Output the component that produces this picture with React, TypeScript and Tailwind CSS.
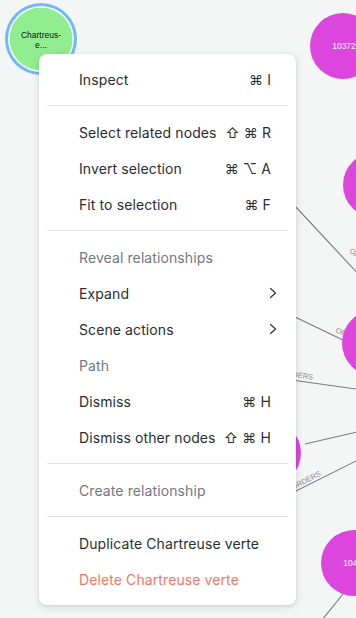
import React from "react";

type Item =
  | { kind: "item"; label: string; shortcut?: string; sub?: boolean; tone?: "normal" | "muted" | "danger" }
  | { kind: "divider" };

const items: Item[] = [
  { kind: "item", label: "Inspect", shortcut: "⌘ I" },
  { kind: "divider" },
  { kind: "item", label: "Select related nodes", shortcut: "⇧ ⌘ R" },
  { kind: "item", label: "Invert selection", shortcut: "⌘ ⌥ A" },
  { kind: "item", label: "Fit to selection", shortcut: "⌘ F" },
  { kind: "divider" },
  { kind: "item", label: "Reveal relationships", tone: "muted" },
  { kind: "item", label: "Expand", sub: true },
  { kind: "item", label: "Scene actions", sub: true },
  { kind: "item", label: "Path", tone: "muted" },
  { kind: "item", label: "Dismiss", shortcut: "⌘ H" },
  { kind: "item", label: "Dismiss other nodes", shortcut: "⇧ ⌘ H" },
  { kind: "divider" },
  { kind: "item", label: "Create relationship", tone: "muted" },
  { kind: "divider" },
  { kind: "item", label: "Duplicate Chartreuse verte" },
  { kind: "item", label: "Delete Chartreuse verte", tone: "danger" },
];

function Chevron() {
  return (
    <svg width="8" height="12" viewBox="0 0 8 12" fill="none">
      <path d="M1.5 1.5 L6.5 6 L1.5 10.5" stroke="#30333a" strokeWidth="1.2" strokeLinecap="round" strokeLinejoin="round" />
    </svg>
  );
}

function Canvas() {
  const magenta = "#dc46dc";
  const line = "#7a7a7a";
  return (
    <svg className="absolute inset-0" width="356" height="618" viewBox="0 0 356 618">
      {/* edges */}
      <line x1="280" y1="190" x2="390" y2="308" stroke={line} strokeWidth="1.1" />
      <line x1="270" y1="305" x2="345" y2="341" stroke={line} strokeWidth="1.1" />
      <line x1="270" y1="377" x2="370" y2="391" stroke={line} strokeWidth="1.1" />
      <line x1="305" y1="444" x2="370" y2="429" stroke={line} strokeWidth="1.1" />
      <line x1="270" y1="504" x2="370" y2="454" stroke={line} strokeWidth="1.1" />
      <line x1="343" y1="594" x2="322" y2="620" stroke={line} strokeWidth="1.1" />
      {/* labels */}
      <g fontFamily="'Liberation Sans', Arial, sans-serif" fontSize="7.5" fill="#8a8a8a">
        <text transform="translate(349 251) rotate(47)">ORDERS</text>
        <text transform="translate(335 332) rotate(25)">ORDERS</text>
        <text transform="translate(281 375) rotate(8.7)">ORDERS</text>
        <text transform="translate(293 490) rotate(-27.7)">ORDERS</text>
      </g>
      {/* nodes */}
      <circle cx="343" cy="46" r="33" fill={magenta} />
      <circle cx="376" cy="185" r="33" fill={magenta} />
      <circle cx="375" cy="343" r="33" fill={magenta} />
      <circle cx="268" cy="453" r="33" fill={magenta} />
      <circle cx="354" cy="563" r="33" fill={magenta} />
      <g fontFamily="'Liberation Sans', Arial, sans-serif" fontSize="8.5" fill="#ffffff" textAnchor="middle">
        <text x="344" y="49">10372</text>
        <text x="355" y="566">10445</text>
      </g>
      {/* selected node */}
      <circle cx="41" cy="39" r="36" fill="#6fbaf5" />
      <circle cx="41" cy="39" r="33" fill="#ffffff" />
      <circle cx="41" cy="39" r="31.5" fill="#90ee90" />
      <g fontFamily="'Liberation Sans', Arial, sans-serif" fontSize="8.5" fill="#111111" textAnchor="middle">
        <text x="41" y="38">Chartreus-</text>
        <text x="41" y="48">e...</text>
      </g>
    </svg>
  );
}

export default function App() {
  return (
    <div
      className="relative w-[356px] h-[618px] overflow-hidden bg-[#f4f5f5]"
      style={{ fontFamily: "Inter, 'Noto Sans', 'DejaVu Sans', sans-serif" }}
    >
      <Canvas />
      <div className="absolute left-[39px] top-[54px] w-[257px] rounded-lg bg-white pt-[7px] pb-2 shadow-[0_2px_10px_rgba(0,0,0,0.12),0_1px_3px_rgba(0,0,0,0.08)]">
        {items.map((it, i) =>
          it.kind === "divider" ? (
            <div key={i} className="mx-2 my-2 h-px bg-[#e3e4e6]" />
          ) : (
            <div key={i} className="flex h-9 items-center justify-between pl-10 pr-[21px] text-[14px] tracking-[0.1px]">
              <span
                className={
                  it.tone === "muted"
                    ? "text-[#737880]"
                    : it.tone === "danger"
                    ? "text-[#f0786a]"
                    : "text-[#2a2d34]"
                }
              >
                {it.label}
              </span>
              {it.shortcut ? (
                <span className="pr-1 text-[14px] text-[#2a2d34]" style={{ fontFamily: "Inter, 'DejaVu Sans', sans-serif" }}>
                  {it.shortcut}
                </span>
              ) : it.sub ? (
                <span className="mr-[-2px]">
                  <Chevron />
                </span>
              ) : null}
            </div>
          )
        )}
      </div>
    </div>
  );
}
